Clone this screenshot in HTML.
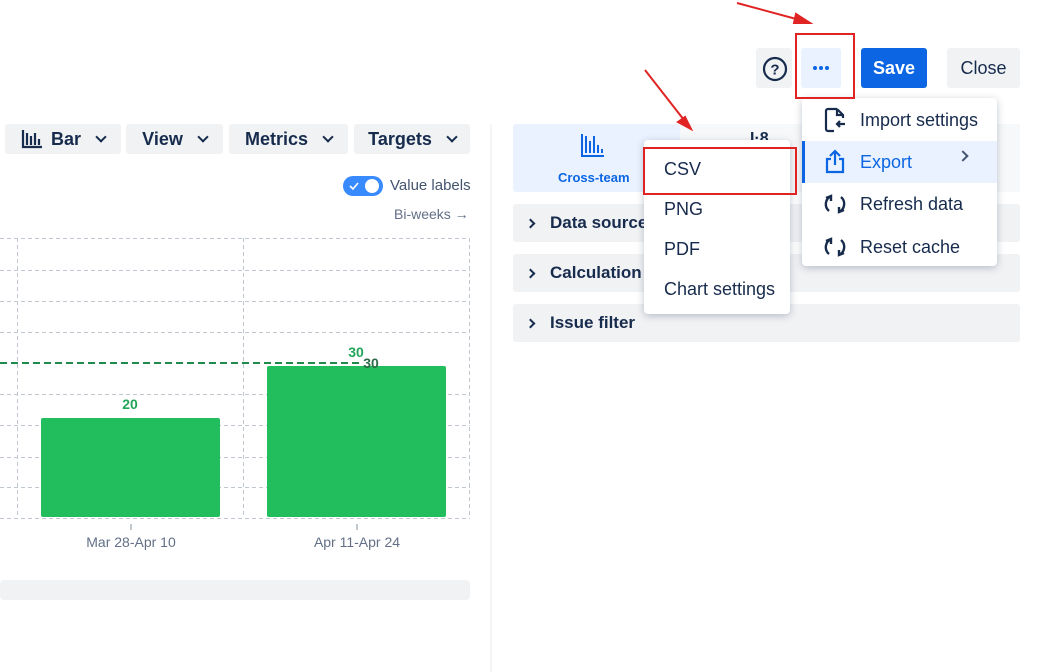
<!DOCTYPE html><html><head><style>
body{margin:0;width:1037px;height:672px;background:#fff;position:relative;overflow:hidden;font-family:"Liberation Sans",sans-serif;color:#172b4d}
.a{position:absolute}
.btn{position:absolute;background:#f1f2f4;border-radius:3px;font-size:18px;font-weight:bold;display:flex;align-items:center;justify-content:center;gap:8px}
.chev{display:inline-block;width:6px;height:6px;border-right:2.5px solid #172b4d;border-bottom:2.5px solid #172b4d;transform:rotate(45deg);margin:-4px 0 0 8px}
.acc{position:absolute;left:513px;width:507px;height:38px;background:#f1f2f4;border-radius:3px;font-size:17px;font-weight:bold;display:flex;align-items:center}
.acc i{display:inline-block;width:5px;height:5px;border-right:2px solid #172b4d;border-top:2px solid #172b4d;transform:rotate(45deg);margin:0 16px 0 14px}
.mi{position:absolute;left:0;width:195px;height:42px;font-size:18px;display:flex;align-items:center;color:#172b4d}
.si{position:absolute;left:20px;font-size:18px;color:#172b4d}
</style></head><body>
<!-- toolbar -->
<div class="btn" style="left:5px;top:124px;width:116px;height:30px"><svg width="22" height="20" viewBox="0 0 22 20"><path d="M2 1v17h19M6 4v12M10 7v9M14 4v12M18 10v6" stroke="#172b4d" stroke-width="2.2" fill="none"/></svg>Bar<span class="chev"></span></div>
<div class="btn" style="left:126px;top:124px;width:97px;height:30px">View<span class="chev"></span></div>
<div class="btn" style="left:229px;top:124px;width:119px;height:30px">Metrics<span class="chev"></span></div>
<div class="btn" style="left:354px;top:124px;width:116px;height:30px">Targets<span class="chev"></span></div>
<!-- toggle -->
<div class="a" style="left:343px;top:176px;width:40px;height:20px;border-radius:10px;background:#388bff"><div class="a" style="left:22px;top:3px;width:14px;height:14px;border-radius:7px;background:#fff"></div><svg class="a" style="left:6px;top:5px" width="10" height="10"><path d="M1 5l3 3 5-6" stroke="#fff" stroke-width="1.6" fill="none"/></svg></div>
<div class="a" style="left:390px;top:177px;font-size:15px;color:#44546f">Value labels</div>
<div class="a" style="left:394px;top:206px;font-size:14px;color:#626f86">Bi-weeks →</div>
<!-- chart -->
<svg class="a" style="left:0;top:0" width="500" height="672">
<g stroke="#c1c7d0" stroke-dasharray="4 3" stroke-width="1">
<path d="M0 238.5H470M0 270.5H470M0 301.5H470M0 332.5H470M0 394.5H470M0 425.5H470M0 457.5H470M0 487.5H470M0 518.5H470M17.5 238V518M243.5 238V518M469.5 238V518"/></g>
<rect x="41" y="418" width="179" height="99" rx="2" fill="#22bd5c"/>
<rect x="267" y="366" width="179" height="151" rx="2" fill="#22bd5c"/>
<path d="M0 363H360" stroke="#1f8a4c" stroke-width="2" stroke-dasharray="7 4"/>
<text x="130" y="409" fill="#22a559" font-size="14" font-weight="bold" text-anchor="middle">20</text>
<text x="356" y="357" fill="#22a559" font-size="14" font-weight="bold" text-anchor="middle">30</text>
<text x="371" y="368" fill="#2d6b47" font-size="14" font-weight="bold" text-anchor="middle">30</text>
<path d="M131 524v6M357 524v6" stroke="#8590a2"/>
<text x="131" y="547" fill="#626f86" font-size="14" text-anchor="middle">Mar 28-Apr 10</text>
<text x="357" y="547" fill="#626f86" font-size="14" text-anchor="middle">Apr 11-Apr 24</text>
<rect x="0" y="580" width="470" height="20" rx="4" fill="#f1f2f4"/>
<rect x="490" y="124" width="2" height="548" fill="#f4f5f7"/>
</svg>
<!-- right panel -->
<div class="a" style="left:513px;top:124px;width:167px;height:68px;background:#e9f2fe;border-radius:3px"></div>
<svg class="a" style="left:580px;top:133px" width="26" height="26"><path d="M2 1v22h22M6 3v17M10 8v12M14 3v17M18 12v8M22 16v4" stroke="#0c66e4" stroke-width="2" fill="none"/></svg>
<div class="a" style="left:558px;top:170px;font-size:13px;font-weight:bold;color:#0c66e4">Cross-team</div>
<div class="a" style="left:680px;top:124px;width:340px;height:68px;background:#f7f8f9"></div>
<div class="a" style="left:750px;top:130px;font-size:16px;font-weight:bold">I·8</div>
<div class="acc" style="top:204px"><i></i>Data source</div>
<div class="acc" style="top:254px"><i></i>Calculation</div>
<div class="acc" style="top:304px"><i></i>Issue filter</div>
<!-- header buttons -->
<div class="a" style="left:756px;top:48px;width:36px;height:40px;background:#f1f2f4;border-radius:3px"></div>
<svg class="a" style="left:762px;top:56px" width="26" height="26"><circle cx="13" cy="13" r="11" stroke="#172b4d" stroke-width="2.2" fill="none"/><text x="13" y="18.5" font-size="15" font-weight="bold" text-anchor="middle" fill="#172b4d" font-family="Liberation Sans">?</text></svg>
<div class="a" style="left:801px;top:48px;width:40px;height:40px;background:#e9f2fe;border-radius:3px"></div>
<div class="a" style="left:813px;top:66px;width:4px;height:4px;border-radius:2px;background:#0c66e4;box-shadow:6px 0 #0c66e4,12px 0 #0c66e4"></div>
<div class="btn" style="left:861px;top:48px;width:66px;height:40px;background:#0c66e4;color:#fff">Save</div>
<div class="btn" style="left:947px;top:48px;width:73px;height:40px;font-weight:normal">Close</div>
<!-- menu -->
<div class="a" style="left:802px;top:98px;width:195px;height:168px;background:#fff;border-radius:4px;box-shadow:0 2px 8px rgba(9,30,66,.25)">
<div class="mi" style="top:1px"><svg style="margin:0 12px 0 20px" width="26" height="26"><path d="M15 2H6a2 2 0 0 0-2 2v18a2 2 0 0 0 2 2h6M15 2l6 6v3M15 2v6h6M23 17h-8M18 14l-3 3 3 3" stroke="#172b4d" stroke-width="2.2" fill="none"/></svg>Import settings</div>
<div class="mi" style="top:43px;background:#e9f2fe;color:#0c66e4;border-left:3px solid #0c66e4;width:192px"><svg style="margin:0 12px 0 17px" width="26" height="26"><path d="M9 10H5v13h16V10h-4M13 16V3M8 7l5-5 5 5" stroke="#0c66e4" stroke-width="2.2" fill="none"/></svg>Export<span style="position:absolute;left:154px;top:11px;width:6px;height:6px;border-right:2.5px solid #44546f;border-top:2.5px solid #44546f;transform:rotate(45deg)"></span></div>
<div class="mi" style="top:85px"><svg style="margin:0 12px 0 20px" width="26" height="26"><path d="M9 5a9 9 0 0 0-2 15M4 7l5-2 0 5M17 21a9 9 0 0 0 2-15M22 19l-5 2 0-5" stroke="#172b4d" stroke-width="2.4" fill="none"/></svg>Refresh data</div>
<div class="mi" style="top:128px"><svg style="margin:0 12px 0 20px" width="26" height="26"><path d="M9 5a9 9 0 0 0-2 15M4 7l5-2 0 5M17 21a9 9 0 0 0 2-15M22 19l-5 2 0-5" stroke="#172b4d" stroke-width="2.4" fill="none"/></svg>Reset cache</div>
</div>
<!-- submenu -->
<div class="a" style="left:644px;top:140px;width:146px;height:174px;background:#fff;border-radius:4px;box-shadow:0 2px 8px rgba(9,30,66,.25)">
<div class="si" style="top:19px">CSV</div>
<div class="si" style="top:59px">PNG</div>
<div class="si" style="top:99px">PDF</div>
<div class="si" style="top:139px">Chart settings</div>
</div>
<!-- annotations -->
<div class="a" style="left:795px;top:33px;width:56px;height:62px;border:2px solid #e02424"></div>
<div class="a" style="left:643px;top:147px;width:150px;height:44px;border:2px solid #e02424"></div>
<svg class="a" style="left:0;top:0" width="1037" height="672"><g stroke="#e02424" stroke-width="2" fill="#e02424">
<path d="M737 3L800 20"/><path d="M810 23l-14-9-2 9z"/>
<path d="M645 70L684 120"/><path d="M691 129l-13-7 7-5z"/></g></svg>
</body></html>
